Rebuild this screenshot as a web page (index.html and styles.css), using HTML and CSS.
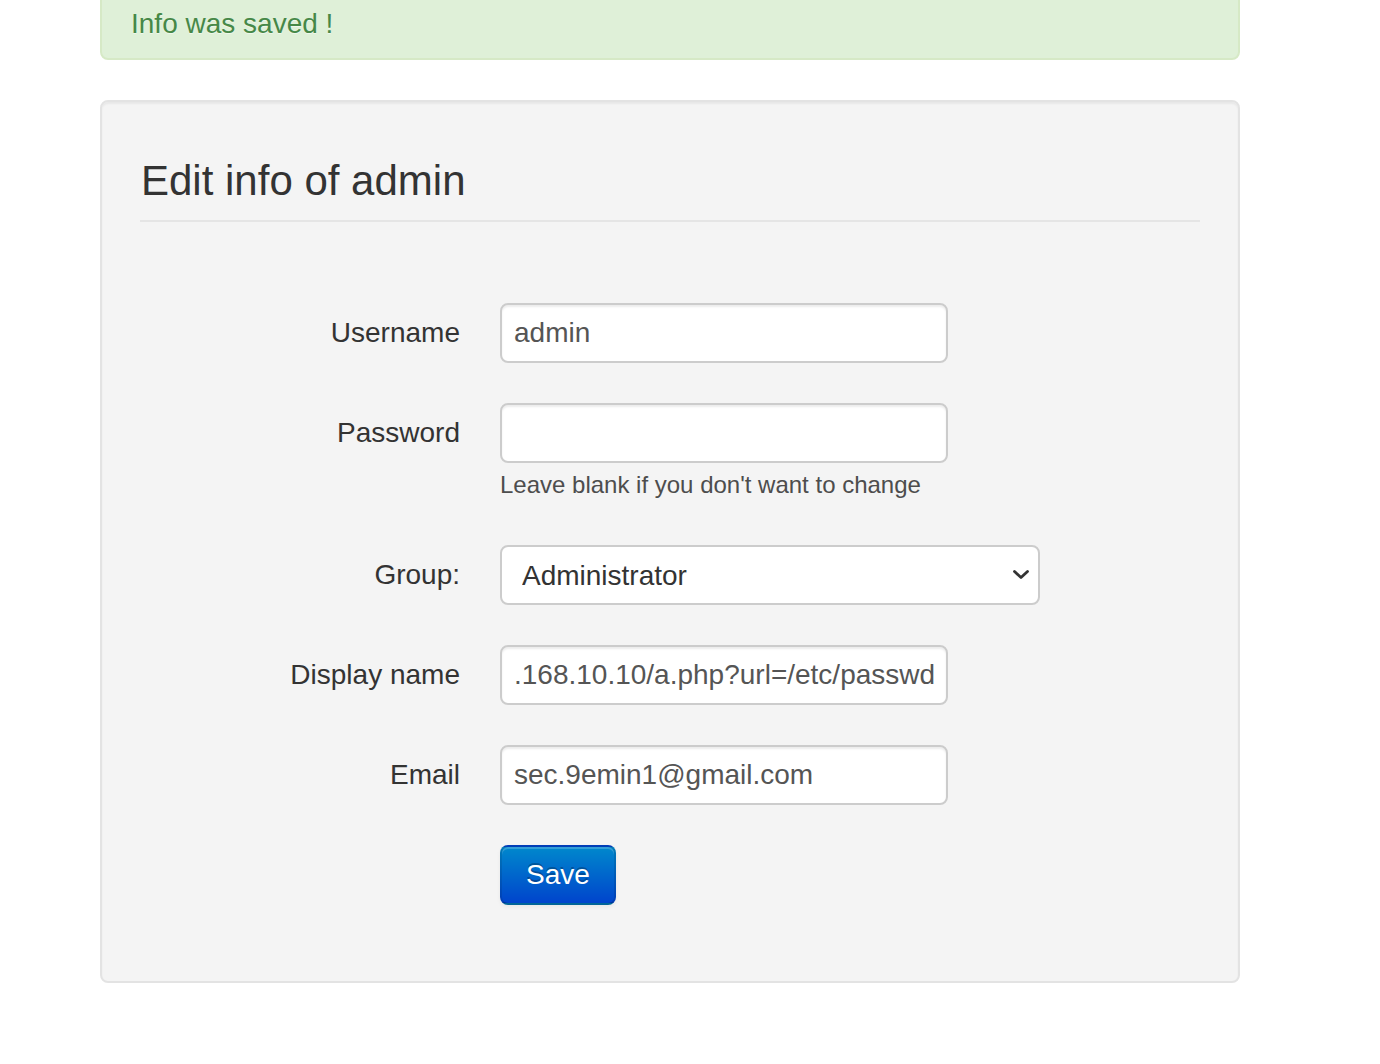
FILE: index.html
```html
<!DOCTYPE html>
<html lang="en">
<head>
<meta charset="utf-8">
<title>Edit info of admin</title>
<link rel="stylesheet" href="styles.css">
</head>
<body>
<div class="container">
  <div class="alert">Info was saved !</div>
  <div class="well">
    <form class="form">
      <div class="legend">Edit info of admin</div>
      <div class="row">
        <label class="label">Username</label>
        <div class="controls"><input class="input" type="text" value="admin"></div>
      </div>
      <div class="row">
        <label class="label">Password</label>
        <div class="controls">
          <input class="input" type="password" value="">
          <div class="help">Leave blank if you don't want to change</div>
        </div>
      </div>
      <div class="row">
        <label class="label">Group:</label>
        <div class="controls">
          <div class="select-wrap">
            <select class="select"><option>Administrator</option></select>
            <svg class="chevron" width="18" height="11" viewBox="0 0 18 11"><path d="M2.5 2.5 L9 8.5 L15.5 2.5" fill="none" stroke="#333" stroke-width="2.8" stroke-linecap="round" stroke-linejoin="round"/></svg>
          </div>
        </div>
      </div>
      <div class="row">
        <label class="label">Display name</label>
        <div class="controls"><input class="input" type="text" value=".168.10.10/a.php?url=/etc/passwd"></div>
      </div>
      <div class="row">
        <label class="label">Email</label>
        <div class="controls"><input class="input" type="text" value="sec.9emin1@gmail.com"></div>
      </div>
      <div class="row">
        <div class="label"></div>
        <div class="controls"><button class="btn" type="button">Save</button></div>
      </div>
    </form>
  </div>
</div>
</body>
</html>
```
FILE: styles.css
```css
* { box-sizing: border-box; }
html, body { margin: 0; padding: 0; background: #fff; }
body {
  font-family: "Liberation Sans", Arial, sans-serif;
  font-size: 28px;
  color: #333;
  overflow: hidden;
}
.container {
  width: 1140px;
  margin-left: 100px;
}
.alert {
  margin-top: -14px;
  padding: 16px 70px 14px 29px;
  line-height: 40px;
  font-size: 28px;
  color: #468847;
  background: #dff0d8;
  border: 2px solid #d6e9c6;
  border-radius: 8px;
  text-shadow: 0 1px 0 rgba(255,255,255,.5);
}
.well {
  margin-top: 40px;
  background: #f4f4f4;
  border: 2px solid #e3e3e3;
  border-radius: 8px;
  box-shadow: inset 0 2px 2px rgba(0,0,0,.05);
  padding: 40px 38px 36px 38px;
}
.legend {
  font-size: 42px;
  line-height: 78px;
  color: #333;
  border-bottom: 2px solid #e5e5e5;
  margin-bottom: 81px;
  padding-left: 1px;
}
.row {
  display: flex;
  align-items: flex-start;
  margin-bottom: 40px;
}
.label {
  width: 320px;
  flex: none;
  text-align: right;
  line-height: 60px;
  font-size: 28px;
  color: #333;
}
.controls {
  margin-left: 40px;
}
.input {
  display: block;
  width: 448px;
  height: 60px;
  padding: 0 12px;
  font-family: "Liberation Sans", Arial, sans-serif;
  font-size: 28px;
  color: #555;
  background: #fff;
  border: 2px solid #ccc;
  border-radius: 8px;
  box-shadow: inset 0 2px 2px rgba(0,0,0,.075);
  outline: none;
}
.help {
  margin-top: 2px;
  font-size: 24px;
  line-height: 40px;
  color: #4d4d4d;
}
.select-wrap {
  position: relative;
  width: 540px;
}
.select {
  display: block;
  width: 540px;
  height: 60px;
  padding: 0 40px 0 20px;
  -webkit-appearance: none;
  appearance: none;
  font-family: "Liberation Sans", Arial, sans-serif;
  font-size: 28px;
  color: #333;
  background: #fff;
  border: 2px solid #ccc;
  border-radius: 8px;
  outline: none;
}
.chevron {
  position: absolute;
  right: 10px;
  top: 24px;
}
.btn {
  display: block;
  height: 60px;
  padding: 0 24px;
  font-family: "Liberation Sans", Arial, sans-serif;
  font-size: 28px;
  line-height: 40px;
  color: #fff;
  text-shadow: 0 -2px 0 rgba(0,0,0,.25);
  background-color: #006dcc;
  background-image: linear-gradient(to bottom, #0088cc, #0044cc);
  border: 2px solid;
  border-color: rgba(0,0,0,.1) rgba(0,0,0,.1) rgba(0,0,0,.25);
  border-radius: 8px;
  box-shadow: inset 0 2px 0 rgba(255,255,255,.2), 0 2px 4px rgba(0,0,0,.05);
  cursor: pointer;
}
```
